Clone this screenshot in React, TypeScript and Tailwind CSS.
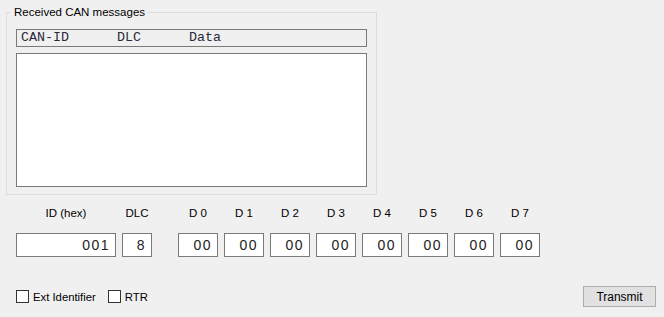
const dataBytes = ["D 0", "D 1", "D 2", "D 3", "D 4", "D 5", "D 6", "D 7"];

const Field = ({ label, value, width }: { label: string; value: string; width: string }) => {
  return (
    <div className={`flex flex-col items-center ${width}`}>
      <div className="h-[16px] text-[11.5px] leading-[16px] text-black">{label}</div>
      <div className="mt-[12px] flex h-[24px] w-full items-center justify-end border border-[#7a7a7a] bg-white pr-[5px] text-[14px] tracking-[1.5px] text-[#222]">
        {value}
      </div>
    </div>
  );
};

const Checkbox = ({ label }: { label: string }) => {
  return (
    <div className="flex items-center gap-[4px]">
      <div className="h-[13px] w-[13px] border border-[#333] bg-white" />
      <span className="text-[11.3px] leading-[16px] text-black">{label}</span>
    </div>
  );
};

export default function App() {
  return (
    <div className="flex h-[317px] w-[664px] flex-col bg-[#f0f0f0] font-['Liberation_Sans',sans-serif]">
      {/* received messages group */}
      <div className="relative ml-[6px] mt-[12px] h-[183px] w-[371px] border border-[#dcdcdc] pl-[9px] pt-[16px]">
        <span className="absolute left-[4px] top-[-9px] bg-[#f0f0f0] px-[3px] text-[11.5px] leading-[16px] text-black">
          Received CAN messages
        </span>
        <div className="flex h-[18px] w-[351px] items-center border border-[#7a7a7a] bg-[#f0f0f0] pl-[4px] font-['Liberation_Mono',monospace] text-[13.33px] whitespace-pre text-[#2a2a3a]">
          {"CAN-ID      DLC      Data"}
        </div>
        <div className="mt-[6px] h-[134px] w-[351px] border border-[#7a7a7a] bg-white" />
      </div>

      {/* transmit fields */}
      <div className="ml-[16px] mt-[10px] flex">
        <Field label="ID (hex)" value="001" width="w-[100px]" />
        <div className="ml-[6px]">
          <Field label="DLC" value="8" width="w-[30px]" />
        </div>
        <div className="ml-[26px] flex gap-[6px]">
          {dataBytes.map((d) => (
            <Field key={d} label={d} value="00" width="w-[40px]" />
          ))}
        </div>
      </div>

      {/* bottom row */}
      <div className="ml-[16px] mr-[8px] mt-[29px] flex items-center justify-between">
        <div className="flex gap-[12px]">
          <Checkbox label="Ext Identifier" />
          <Checkbox label="RTR" />
        </div>
        <button className="h-[21px] w-[73px] border border-[#adadad] bg-[#e1e1e1] text-[12px] text-black">
          Transmit
        </button>
      </div>
    </div>
  );
}
